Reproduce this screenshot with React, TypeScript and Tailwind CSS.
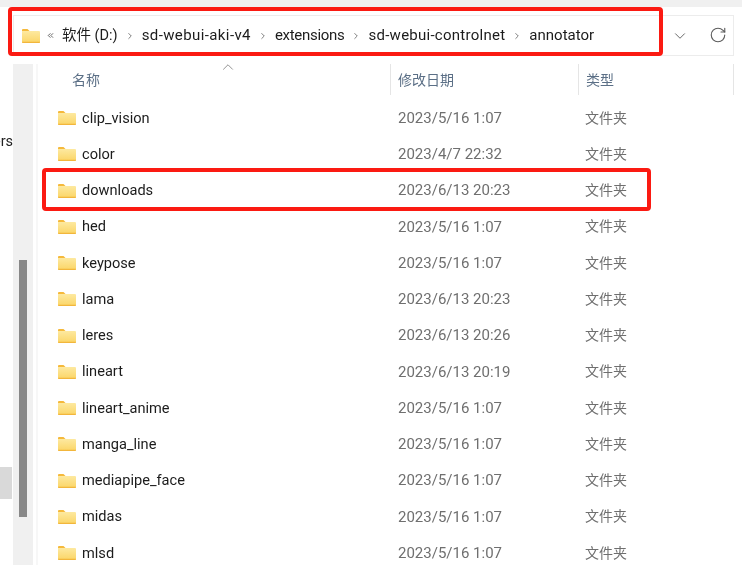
import { ChevronDown, ChevronRight, ChevronUp, ChevronsLeft, RotateCw } from "lucide-react";

const rows = [
  ["clip_vision", "2023/5/16 1:07"],
  ["color", "2023/4/7 22:32"],
  ["downloads", "2023/6/13 20:23"],
  ["hed", "2023/5/16 1:07"],
  ["keypose", "2023/5/16 1:07"],
  ["lama", "2023/6/13 20:23"],
  ["leres", "2023/6/13 20:26"],
  ["lineart", "2023/6/13 20:19"],
  ["lineart_anime", "2023/5/16 1:07"],
  ["manga_line", "2023/5/16 1:07"],
  ["mediapipe_face", "2023/5/16 1:07"],
  ["midas", "2023/5/16 1:07"],
  ["mlsd", "2023/5/16 1:07"],
];

const crumbs = [
  ["sd-webui-aki-v4", "tracking-[0.4px]"],
  ["extensions", "tracking-[-0.3px]"],
  ["sd-webui-controlnet", "tracking-[0.26px]"],
  ["annotator", "tracking-normal"],
];

const font = "font-['Roboto','Noto_Sans_CJK_SC',sans-serif]";

function Folder() {
  return (
    <svg width="18" height="14" viewBox="0 0 18 14" className="shrink-0">
      <defs>
        <linearGradient id="fold" x1="0" y1="0" x2="0" y2="1">
          <stop offset="0" stopColor="#fde9a0" />
          <stop offset="1" stopColor="#fbd566" />
        </linearGradient>
      </defs>
      <path d="M0 1 a1 1 0 0 1 1-1 h4.500 l2 2 h-7.500z" fill="#f5b93b" />
      <path d="M0 2 h17 a1 1 0 0 1 1 1 v10 a1 1 0 0 1-1 1 h-16 a1 1 0 0 1-1-1z" fill="url(#fold)" />
      <path d="M0 12.800 h18 v.2 a1 1 0 0 1-1 1 h-16 a1 1 0 0 1-1-1z" fill="#f2b63c" />
    </svg>
  );
}

export default function App() {
  return (
    <div className={`relative h-[573px] w-[742px] overflow-hidden bg-white blur-[0.35px] ${font}`}>
      <div className="h-[7px] bg-[#f0f0f0]" />

      <div className="flex h-[57px] items-start pl-[13px] pr-[8px] pt-[8px]">
        <div className="flex h-[41px] w-full items-center border border-[#ececec] pl-[8px]">
          <Folder />
          <ChevronsLeft size={9} strokeWidth={2} className="ml-[6px] text-[#333]" />
          <span className="ml-[7px] text-[14.5px] text-[#1c1c1c]">软件 (D:)</span>
          {crumbs.map(([c, track]) => (
            <div key={c} className="flex items-center">
              <ChevronRight size={10} strokeWidth={1.8} className="mx-[7px] text-[#555]" />
              <span className={`text-[15px] text-[#1c1c1c] ${track}`}>{c}</span>
            </div>
          ))}
          <div className="ml-auto flex items-center gap-[20px] pr-[6px]">
            <ChevronDown size={18} strokeWidth={1.3} className="text-[#666]" />
            <RotateCw size={18} strokeWidth={1.5} className="-translate-y-px text-[#5c5c5c]" />
          </div>
        </div>
      </div>

      <div className="flex h-[501px]">
        <div className="relative w-[13px] shrink-0 overflow-hidden">
          <span className="absolute left-[-7px] top-[67px] text-[14.5px] text-[#222]">ers</span>
          <div className="absolute left-0 top-[403px] h-[32px] w-[12px] bg-[#d9d9d9]" />
        </div>
        <div className="flex w-[20px] shrink-0 flex-col bg-[#f0f0f0] pl-[6px] pt-[196px]">
          <div className="h-[257px] w-[8px] bg-[#888888]" />
        </div>
        <div className="w-[2px] shrink-0" />
        <div className="ml-[1px] w-[2px] shrink-0 bg-[#f7f7f7]" />

        <div className="min-w-0 flex-1">
          <div className="relative flex h-[31px] items-stretch text-[14px] text-[#5b6f86]">
            <ChevronUp size={18} strokeWidth={1.2} className="absolute left-[181px] top-[-6px] text-[#888]" />
            <div className="flex w-[352px] items-center pl-[34px] pt-[2px]">名称</div>
            <div className="flex w-[188px] items-center border-l border-[#e5e5e5] pl-[7px] pt-[2px]">修改日期</div>
            <div className="flex w-[156px] items-center border-x border-[#e5e5e5] pl-[7px] pt-[2px]">类型</div>
          </div>
          <div className="pt-[5px] text-[15px]">
            {rows.map(([name, date]) => (
              <div key={name} className="flex h-[36.25px] items-center">
                <div className="flex w-[352px] items-center gap-[6px] pl-[20px] text-[14.6px] text-[#1c1c1c]">
                  <Folder />
                  <span className="pt-[1px]">{name}</span>
                </div>
                <div className="w-[188px] pl-[8px] text-[#6f6f6f]">{date}</div>
                <div className="pl-[7px] text-[14px] text-[#6f6f6f]">文件夹</div>
              </div>
            ))}
          </div>
        </div>
      </div>

      <div className="absolute left-[8px] top-[7px] h-[49px] w-[655px] rounded-[4px] border-4 border-[#fb1a12]" />
      <div className="absolute left-[42px] top-[168px] h-[43px] w-[609px] rounded-[4px] border-4 border-[#fb1a12]" />
    </div>
  );
}
